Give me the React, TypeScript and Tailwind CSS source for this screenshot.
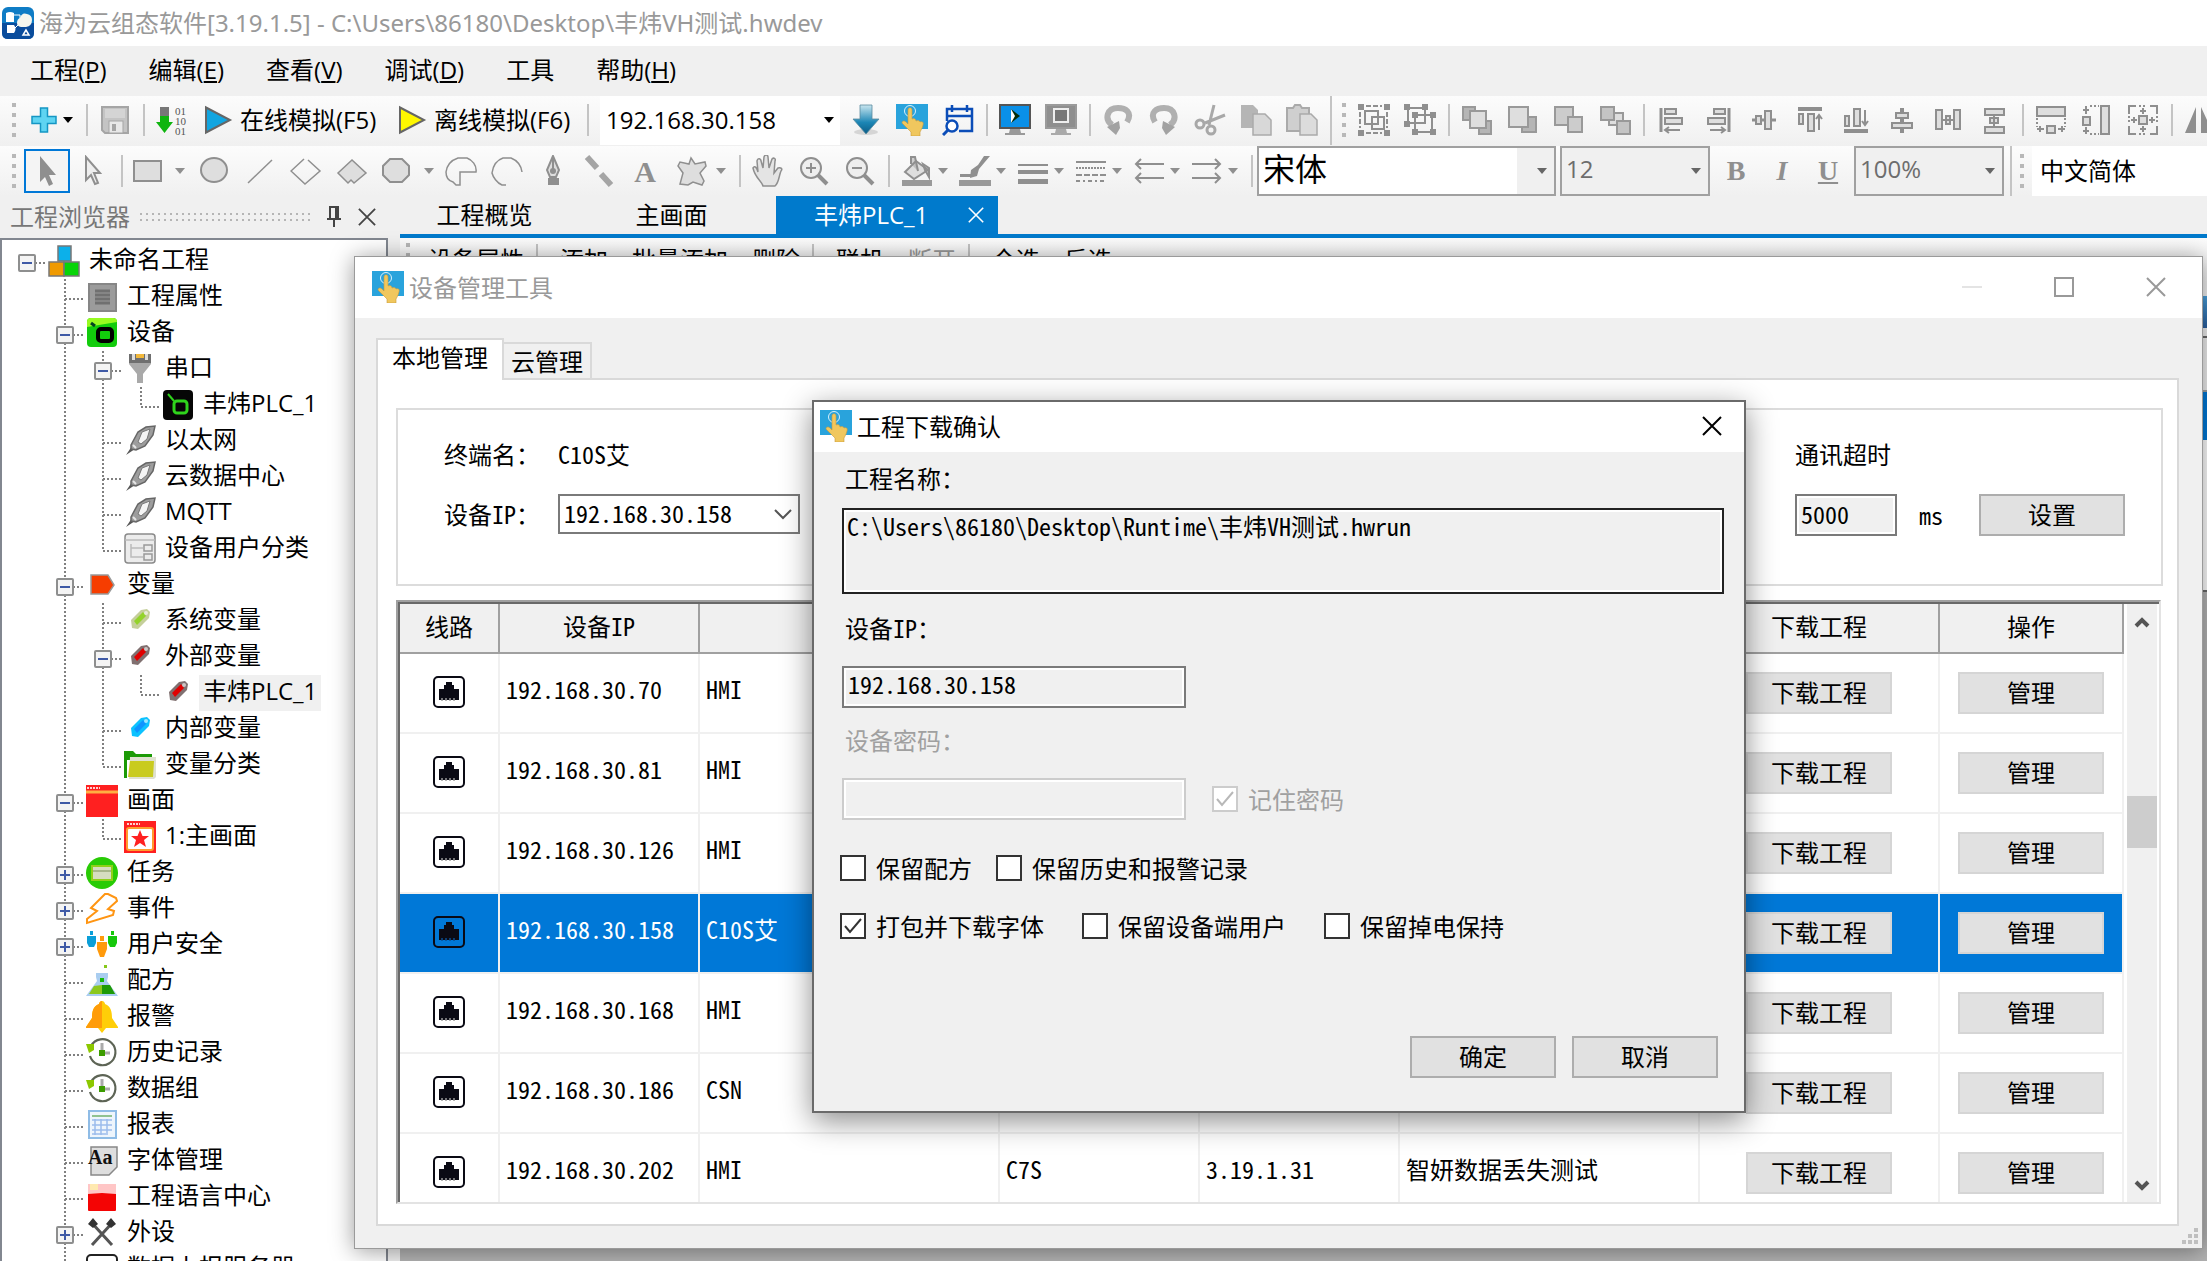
import { useId, type ReactNode } from "react";

const G = "#8f8f8f";
const L = "#dedede";

function Svg({ children, className = "h-8 w-8" }: { children: ReactNode; className?: string }) {
  return (
    <svg viewBox="0 0 32 32" fill="none" className={`shrink-0 ${className}`}>
      {children}
    </svg>
  );
}

function HandIcon() {
  return (
    <Svg>
      <rect y="0" width="32" height="25" fill="#29a3dc" />
      <circle cx="14" cy="7" r="5.5" stroke="#d8f0fb" strokeWidth="1" />
      <path d="M12 6c0-3 4-3 4 0v9c2-1 4 0 4 2 2-1 4 0 4 1 2-1 4 0 3 3-1 4-2 5-3 7v4h-9v-4l-9-9c0-2 2-3 4-1l2 2z" fill="#f0c75e" stroke="#c99b3a" strokeWidth=".6" />
    </Svg>
  );
}

/* Main toolbar icons, in 32px boxes */

const FILE_ICONS = {
  plus: <path d="M12.500 4h7v8.500H28v7h-8.500V28h-7v-8.500H4v-7h8.500z" fill="#5fd4f2" stroke="#1596c4" strokeWidth="1.500" />,
  save: (
    <>
      <path d="M3 3h26v26H6l-3-3z" fill="#c4c4c4" stroke="#a5a5a5" strokeWidth="2" />
      <rect x="6" y="5" width="20" height="9" fill="#d4d4d4" />
      <rect x="10" y="17" width="14" height="12" fill="#e8e8e8" stroke="#a5a5a5" />
      <rect x="13" y="20" width="4" height="7" fill="#a5a5a5" />
    </>
  ),
  transfer: (
    <>
      <path d="M4 3h9v15h4L8.500 29 0 18h4z" fill="#0fb50f" />
      <rect x="4" y="3" width="9" height="9" fill="#777" />
      <text x="19" y="11" fontSize="11" fontFamily="Liberation Serif, serif" fill="#555">01</text>
      <text x="19" y="21" fontSize="11" fontFamily="Liberation Serif, serif" fill="#555">10</text>
      <text x="19" y="31" fontSize="11" fontFamily="Liberation Serif, serif" fill="#555">01</text>
    </>
  ),
  playOnline: <path d="M4 3.500 28 16 4 28.500z" fill="#12a5e0" stroke="#666" strokeWidth="2" />,
  playOffline: <path d="M4 3.500 28 16 4 28.500z" fill="#fff700" stroke="#666" strokeWidth="2" />,
};

const RUN_ICONS = {
  download: (
    <>
      <defs>
        <linearGradient id="down" x1="0" y1="0" x2="0" y2="1">
          <stop offset="0" stopColor="#c9e6ef" />
          <stop offset=".6" stopColor="#1c86b5" />
          <stop offset="1" stopColor="#0b5c86" />
        </linearGradient>
      </defs>
      <ellipse cx="16" cy="28" rx="12" ry="3" fill="#d5d5d5" />
      <path d="M10 1h12v14h7L16 30 3 15h7z" fill="url(#down)" stroke="#5b8ca0" strokeWidth=".8" />
    </>
  ),
  schedule: (
    <g stroke="#0b4db8" strokeWidth="2.500">
      <path d="M5 17V5h25v22H17M5 12h25M10 1v7M25 1v7" />
      <circle cx="10" cy="22" r="5.500" fill="#fff" />
      <path d="m6 26-5 5" strokeWidth="3" />
    </g>
  ),
};

const SCREEN_ICONS = {
  monitorOn: (
    <>
      <path d="M11 25h10l1 4h4v2H6v-2h4z" fill="#999" />
      <rect x="1" y="1" width="30" height="23" fill="#0a90e8" stroke="#555" strokeWidth="2" />
      <path d="M12 5v14l9-7z" fill="#062c06" />
      <path d="M12 5v14l4-7z" fill="#fff" />
    </>
  ),
  monitorOff: (
    <>
      <path d="M11 25h10l1 4h4v2H6v-2h4z" fill="#aaa" />
      <rect x="1" y="1" width="30" height="23" fill="#8f8f8f" stroke="#9b9b9b" strokeWidth="2" />
      <rect x="9" y="5" width="14" height="13" fill="#777" stroke="#eee" strokeWidth="2" />
    </>
  ),
};

const EDIT_ICONS = {
  undo: (
    <>
      <path d="M25 18C31 8 23 4 16 4 5 4 2 15 10 21" stroke="#b0b0b0" strokeWidth="6" />
      <path d="M5 23 17 17l1 7-4 7z" fill="#a2a2a2" />
    </>
  ),
  redo: (
    <>
      <path d="M7 18C1 8 9 4 16 4c11 0 14 11 6 17" stroke="#b0b0b0" strokeWidth="6" />
      <path d="M27 23 15 17l-1 7 4 7z" fill="#a2a2a2" />
    </>
  ),
  cut: (
    <g stroke="#a8a8a8" strokeWidth="3">
      <path d="m20 1-5 20M31 11 11 19" />
      <circle cx="6" cy="20" r="4" />
      <circle cx="17" cy="26" r="4" />
    </g>
  ),
  copy: (
    <>
      <path d="M1 1h12l5 5v18H1z" fill="#b5b5b5" />
      <path d="M13 10h12l6 6v15H13z" fill="#d8d8d8" stroke="#aaa" strokeWidth="1.500" />
    </>
  ),
  paste: (
    <>
      <path d="M1 4h6l2-3h5l2 3h7v23H1z" fill="#cfcfcf" stroke="#aaa" strokeWidth="2" />
      <path d="M14 10h11l6 6v15H14z" fill="#dcdcdc" stroke="#aaa" strokeWidth="1.500" />
    </>
  ),
};

const GROUP_ICONS = {
  group: (
    <g stroke={G} strokeWidth="2">
      <path d="M8 2h16M8 29h16M2 8v16M29 8v16" strokeDasharray="5 2" />
      <path d="M7 7h13v13H7zM14 13h12v12H14z" />
      <path d="M0 0h6v6H0zM26 0h6v6h-6zM0 26h6v6H0zM26 26h6v6h-6z" fill={G} stroke="none" />
    </g>
  ),
  ungroup: (
    <g stroke={G} strokeWidth="2">
      <path d="M4 4h17v15H4zM11 11h17v17H11z" />
      <path d="M0 0h6v6H0zM18 0h6v6h-6zM0 17h6v6H0zM8 8h6v6H8zM26 8h6v6h-6zM8 25h6v6H8zM26 25h6v6h-6z" fill={G} stroke="none" />
    </g>
  ),
};

const ORDER_ICONS = {
  toFront: (
    <g stroke="#999" fill={L} strokeWidth="2">
      <path d="M2 3h12v13H2zM18 17h12v13H18z" fill="#b5b5b5" />
      <path d="M9 7h16v17H9z" />
    </g>
  ),
  forward: (
    <g stroke="#999" fill={L} strokeWidth="2">
      <path d="M15 13h14v15H15z" fill="#b5b5b5" />
      <path d="M2 3h19v20H2z" />
    </g>
  ),
  backward: (
    <g stroke="#999" fill="#ccc" strokeWidth="2">
      <path d="M2 3h18v18H2z" />
      <path d="M15 13h14v15H15z" />
    </g>
  ),
  toBack: (
    <g stroke="#999" fill={L} strokeWidth="2">
      <path d="M10 9h14v12H10z" />
      <path d="M2 3h13v13H2zM18 17h13v13H18z" fill="#c4c4c4" />
    </g>
  ),
};

const ALIGN_ICONS = {
  left: (
    <g stroke={G} strokeWidth="2">
      <path d="M5 4v24" strokeWidth="3" />
      <path d="M9 5h11v5H9zM9 14h17v6H9z" fill={L} />
      <path d="M10 26h14M13 23l-4 3 4 3" />
    </g>
  ),
  right: (
    <g stroke={G} strokeWidth="2">
      <path d="M27 4v24" strokeWidth="3" />
      <path d="M12 5h11v5H12zM6 14h17v6H6z" fill={L} />
      <path d="M8 26h14M19 23l4 3-4 3" />
    </g>
  ),
  centerV: (
    <g stroke={G} strokeWidth="2">
      <path d="M4 16h24" strokeWidth="3" />
      <path d="M8 12h5v8H8zM17 7h6v18h-6z" fill={L} />
    </g>
  ),
  top: (
    <g stroke={G} strokeWidth="2">
      <path d="M4 5h24" strokeWidth="4" />
      <path d="M5 10h4v10H5zM14 10h6v17h-6z" fill={L} />
      <path d="M25 26V12M22 15l3-4 3 4" />
    </g>
  ),
  bottom: (
    <g stroke={G} strokeWidth="2">
      <path d="M4 27h24" strokeWidth="4" />
      <path d="M5 12h4v10H5zM14 5h6v17h-6z" fill={L} />
      <path d="M25 6v14M22 17l3 4 3-4" />
    </g>
  ),
  centerH: (
    <g stroke={G} strokeWidth="2">
      <path d="M16 4v25" strokeWidth="4" />
      <path d="M10 9h12v5H10zM6 19h20v5H6z" fill={L} />
    </g>
  ),
  spaceH: (
    <g stroke={G} strokeWidth="2">
      <path d="M4 6h6v19H4zM22 6h6v19h-6z" fill={L} />
      <path d="M10 16h12M14 12h4v8h-4z" fill={L} />
    </g>
  ),
  spaceV: (
    <g stroke={G} strokeWidth="2">
      <path d="M7 5h19v6H7zM7 23h19v6H7z" fill={L} />
      <path d="M16 11v12M12 14h8v5h-8z" fill={L} />
    </g>
  ),
};

const SIZE_ICONS = {
  sameWidth: (
    <g stroke={G} strokeWidth="2">
      <path d="M2 3h28v9H2z" fill={L} />
      <path d="M2 14v9M30 14v9" strokeDasharray="2 2" />
      <path d="M12 22h8v7h-8z" fill={L} />
      <path d="M2 25h7M23 25h7M5 22v6M27 22v6" />
    </g>
  ),
  sameHeight: (
    <g stroke={G} strokeWidth="2">
      <path d="M20 2h8v28h-8z" fill={L} />
      <path d="M9 2h9M9 30h9" strokeDasharray="2 2" />
      <path d="M2 13h7v8H2z" fill={L} />
      <path d="M5 2v8M5 23v7M2 6h6M2 27h6" />
    </g>
  ),
  sameSize: (
    <g stroke={G} strokeWidth="2">
      <path d="M2 10V2h7M23 2h7v8M30 22v8h-7M9 30H2v-8" />
      <path d="M12 2h8M12 30h8M2 12v8M30 12v8" strokeDasharray="2 2" />
      <path d="M12 12h8v8h-8z" fill={L} />
      <path d="M16 4v6M16 22v6M4 16h6M22 16h6M13 7h6M13 25h6M7 13v6M25 13v6" />
    </g>
  ),
};

const SHAPE_ICONS = {
  ellipse: <ellipse cx="16" cy="15" rx="13" ry="12" fill={L} stroke={G} strokeWidth="2" />,
  line: <path d="M4 28 28 5" stroke={G} strokeWidth="1.500" />,
  polyline: <path d="M14 4 1 16l14 13 15-13L18 5" stroke={G} strokeWidth="1.500" />,
  polygon: <path d="M16 5 2 18l10 10 3-3 3 3 12-10z" fill={L} stroke={G} strokeWidth="1.500" />,
};

const CURVE_ICONS = {
  pie: <path d="M15 30V17h16c1-7-4-12-9-14h-9C7 5 2 10 1 17c0 6 3 9 7 10l3 3z" stroke={G} strokeWidth="1.500" />,
  arc: <path d="M15 30h-4C6 28 2 22 1 18 2 11 6 5 12 3h8c5 2 10 7 11 14" stroke={G} strokeWidth="1.500" />,
  pen: (
    <>
      <path d="M16 1 10 15l3 7h6l3-7z" fill={L} stroke={G} strokeWidth="2" />
      <path d="M15 1h2v14h-2zM11 23h11v7H11z" fill={G} />
      <circle cx="16" cy="16" r="3" fill={G} />
    </>
  ),
  brush: <path d="m4 2 10 11M18 19l10 11" stroke="#a5a5a5" strokeWidth="6" />,
  text: (
    <text x="16" y="27" textAnchor="middle" fontSize="30" fontWeight="700" fontFamily="Liberation Serif, serif" fill={G}>A</text>
  ),
  star: <path d="M16 3 20 9l10-2 1 4-6 7 4 8-2 4-9-3-5 3-8-1 3-11-5-7 2-4 9 2z" fill={L} stroke={G} strokeWidth="1.500" />,
};

const VIEW_ICONS = {
  hand: <path d="M11 31c-1-5-8-8-10-18 2-3 4 0 5 4L5 6c1-4 4-2 4 0l2 7 1-11c1-3 4-2 4 0l1 11 3-9c2-2 4 0 3 2l-1 12 4-5c3-1 5 1 3 3-2 4-2 12-6 15z" fill="#e4e4e4" stroke={G} strokeWidth="1.500" />,
  zoomIn: (
    <g stroke={G} strokeWidth="2">
      <circle cx="13" cy="13" r="10" fill="#eee" />
      <path d="M8 13h10M13 8v10" />
      <path d="m20 20 9 9" strokeWidth="4" />
    </g>
  ),
  zoomOut: (
    <g stroke={G} strokeWidth="2">
      <circle cx="13" cy="13" r="10" fill="#eee" />
      <path d="M8 13h10" />
      <path d="m20 20 9 9" strokeWidth="4" />
    </g>
  ),
};

const STYLE_ICONS = {
  fill: (
    <>
      <path d="m4 17 11-11 12 9-14 9z" fill={L} stroke={G} strokeWidth="2" />
      <path d="M10 9V2h4l3 14M22 9l6 4v9l-4-7z" stroke={G} strokeWidth="2" fill={G} fillOpacity=".4" />
      <rect x="1" y="25" width="30" height="6" fill="#999" />
    </>
  ),
  stroke: (
    <>
      <path d="M31 1 20 14l-2 7-7 2 1-8 7-5 6-9z" fill={G} />
      <path d="M1 19h11v3H1z" fill={G} />
      <rect y="25" width="32" height="6" fill="#999" />
    </>
  ),
  lineWidth: <path d="M1 9h30v2H1zM1 15h30v4H1zM1 24h30v5H1z" fill={G} />,
  lineStyle: (
    <g stroke={G} strokeWidth="2">
      <path d="M1 7h30" />
      <path d="M1 13h30" strokeDasharray="2 1" />
      <path d="M1 20h30" strokeDasharray="6 2" />
      <path d="M1 26h30" strokeDasharray="4 3 2 3" />
    </g>
  ),
  arrowStart: <path d="M3 9h28M8 4 3 9l5 5M3 23h28M8 18l-5 5 5 5" stroke={G} strokeWidth="2" />,
  arrowEnd: <path d="M1 9h27M24 4l5 5-5 5M1 23h27M24 18l5 5-5 5" stroke={G} strokeWidth="2" />,
};

/* Project tree icons */

const plug = (
  <>
    <path d="m2 30 6-9 3 3z" fill="#555" />
    <path d="M7 20 14 7 22 2l9-1-2 9-8 11-9 4-5-1z" fill="#9d9d9d" stroke="#666" strokeWidth="1.500" />
    <path d="m14 17 4-10 8-3-3 10-6 5z" fill="#f4f4f4" stroke="#777" />
    <path d="m9 20 3 3" stroke="#e6e6e6" strokeWidth="2" />
  </>
);

function tag(fill: string, edge: string) {
  return (
    <>
      <path d="m7 15 10-10 6-1 3 3-1 6-11 11-6-1z" fill={edge} />
      <path d="m10 16 9-9 3 4-9 9z" fill={fill} />
      <circle cx="22" cy="8" r="2" fill="#fff" fillOpacity=".6" />
    </>
  );
}

const clock = (
  <>
    <path d="M5 9a13 13 0 1 1-1 10" stroke="#5d6455" strokeWidth="2.200" />
    <path d="M16 6v10h8" stroke="#aaa" strokeWidth="3" />
    <rect x="13" y="13" width="6" height="6" fill="#3c9c00" />
    <path d="M0 7h8v6l-5 3z" fill="#8cc800" />
  </>
);

const TREE_ICONS: Record<string, ReactNode> = {
  project: (
    <g stroke="#777" strokeWidth="1.500">
      <path d="M10 1h13v15H10z" fill="#0cb0ea" />
      <path d="M1 17h15v14H1z" fill="#f09a00" />
      <path d="M16 17h15v14H16z" fill="#08d408" />
    </g>
  ),
  props: (
    <>
      <rect x="3" y="3" width="27" height="27" fill="#9b9b9b" stroke="#868686" strokeWidth="2" />
      <path d="M9 10h15M9 14h15M9 18h15M9 22h15" stroke="#707070" strokeWidth="3" />
    </>
  ),
  device: (
    <>
      <rect x="1" y="1" width="30" height="29" rx="4" fill="#12cc0c" />
      <path d="M1 10V5q0-4 4-4h22q4 0 4 4z" fill="#98fb20" />
      <path d="m5 6 4 3" stroke="#042" strokeWidth="3" />
      <rect x="12" y="12" width="14" height="12" rx="3" stroke="#000" strokeWidth="4" />
    </>
  ),
  serial: (
    <>
      <path d="M5 1h22v10l-8 10v9h-6v-9L5 11z" fill="#a9a9a9" />
      <path d="M5 1h22v9H5z" fill="#6f6f6f" />
      <path d="M8 1h3v6H8zM21 1h3v6h-3z" fill="#ddd" />
      <path d="M12 1h8v4h-8z" fill="#f2b83b" />
    </>
  ),
  plc: (
    <>
      <rect x="1" y="1" width="30" height="30" rx="4" fill="#060606" />
      <path d="m6 5 6 7" stroke="#2fd41c" strokeWidth="2" />
      <rect x="12" y="12" width="13" height="12" rx="3" stroke="#2fd41c" strokeWidth="3" />
    </>
  ),
  plug,
  users: (
    <>
      <rect x="1" y="1" width="30" height="29" rx="3" fill="#ececec" stroke="#8a8a8a" strokeWidth="1.500" />
      <path d="M1 7h30M7 11v13h12M7 15h12" stroke="#bbb" strokeWidth="1.500" />
      <path d="M20 12h8v6h-8zM20 21h8v6h-8z" stroke="#999" strokeWidth="1.500" />
    </>
  ),
  variable: <path d="M5 6h17l6 10-6 9H5z" fill="#f63d00" stroke="#999" strokeWidth="1.500" />,
  tagSystem: tag("#93d32a", "#c5cf9a"),
  tagOuter: tag("#e00000", "#807070"),
  tagInner: tag("#0f94ff", "#0cc2ff"),
  folder: (
    <>
      <path d="M0 2h9l3 3h16v6H3v18H0z" fill="#1c9a06" />
      <path d="M6 8h26v20l-2 2H5z" fill="#dfe1cf" />
      <path d="M6 12h24l-1 16H4z" fill="#c9cb1f" />
    </>
  ),
  screens: (
    <>
      <rect width="32" height="32" fill="#ff2020" />
      <path d="M1 3h13" stroke="#ffd0d0" strokeWidth="2" strokeDasharray="2 1" />
      <path d="M0 7h32" stroke="#ffae42" strokeWidth="3" />
    </>
  ),
  screen: (
    <>
      <rect width="32" height="32" fill="#ff2020" />
      <path d="M3 3h13" stroke="#ffd0d0" strokeWidth="2" strokeDasharray="2 1" />
      <rect x="3" y="7" width="26" height="22" rx="2" fill="#fff" stroke="#ff9d2e" strokeWidth="2" />
      <path d="m16 9 2.500 6H25l-5 4 2 7-6-4-6 4 2-7-5-4h6.500z" fill="#ff2020" />
    </>
  ),
  task: (
    <>
      <circle cx="16" cy="16" r="16" fill="#28cb05" />
      <rect x="6" y="9" width="20" height="14" fill="#d6ddc0" stroke="#8fd01a" strokeWidth="2" />
      <path d="M7 14h18" stroke="#98a878" strokeWidth="1.500" />
    </>
  ),
  event: <path d="M19 1 5 15l6 3L1 26v4l26-8 1-4-6-2 9-8-1-3-8-4z" fill="#fff" stroke="#ff9512" strokeWidth="2" />,
  security: (
    <>
      <path d="M1 7h9v7l-2 4H3l-2-4zM4 2h3v4H4z" fill="#0b9fd8" />
      <path d="M22 7h9v7l-2 4h-5l-2-4zM25 2h3v4h-3z" fill="#16c80c" />
      <path d="M11 13h10v7l-3 8h-4l-3-8zM14 7h4v5h-4z" fill="#ff9a0c" />
    </>
  ),
  recipe: (
    <>
      <rect x="18" y="0" width="3" height="3" fill="#86c81a" />
      <path d="M10 8h12v4l-1 4 11 15H0l11-15-1-4z" fill="#a9cdf0" />
      <path d="m8 21 8-1 8 1 5 8H3z" fill="#8cc81e" />
      <path d="M16 20h8l5 9H16z" fill="#1e9a08" />
      <rect x="14" y="13" width="4" height="4" fill="#18b80c" />
    </>
  ),
  alarm: (
    <>
      <path d="M16 0c2 0 3 2 3 3 6 2 7 8 7 14l6 9v1H0v-1l6-9c0-6 1-12 7-14 0-1 1-3 3-3M12 27h8l-4 5z" fill="#ffce08" />
      <path d="M16 0v27H0v-1l6-9c0-6 1-12 7-14 0-1 1-3 3-3" fill="#ff9c08" />
    </>
  ),
  clock,
  report: (
    <>
      <rect x="3" y="2" width="27" height="27" fill="#eef5fc" stroke="#8fbce6" strokeWidth="2" />
      <path d="M6 7h20" stroke="#90c290" strokeWidth="2" />
      <path d="M6 11h20M6 16h20M6 21h20M6 25h14M9 10v16M15 10v16M21 10v16" stroke="#9cbcec" strokeWidth="1.500" />
    </>
  ),
  fonts: (
    <>
      <path d="M5 2h26v20l-8 8H5z" fill="#dedede" stroke="#888" strokeWidth="1.500" />
      <text x="2" y="19" fontSize="20" fontWeight="700" fontFamily="Liberation Serif, serif" fill="#111">Aa</text>
    </>
  ),
  language: (
    <>
      <rect x="2" y="3" width="28" height="27" rx="1" fill="#f40404" />
      <path d="M2 3h28v10l-14-1-14 1z" fill="#ffc6c6" />
      <path d="M4 3h8v6H4z" fill="#ffe9b0" />
    </>
  ),
  tools: (
    <>
      <path d="M5 5 26 28M27 5 6 28" stroke="#555" strokeWidth="3" />
      <path d="M2 7 7 1l5 6-5 4zM30 7l-5-6-5 6 5 4z" fill="#333" />
    </>
  ),
  server: <rect x="1" y="2" width="30" height="28" rx="4" fill="#fff" stroke="#222" strokeWidth="2" />,
};

type Node = { level: number; icon: string; label: string; toggle?: "open" | "closed"; selected?: boolean };

const TREE: Node[] = [
  { level: 0, icon: "project", label: "未命名工程", toggle: "open" },
  { level: 1, icon: "props", label: "工程属性" },
  { level: 1, icon: "device", label: "设备", toggle: "open" },
  { level: 2, icon: "serial", label: "串口", toggle: "open" },
  { level: 3, icon: "plc", label: "丰炜PLC_1" },
  { level: 2, icon: "plug", label: "以太网" },
  { level: 2, icon: "plug", label: "云数据中心" },
  { level: 2, icon: "plug", label: "MQTT" },
  { level: 2, icon: "users", label: "设备用户分类" },
  { level: 1, icon: "variable", label: "变量", toggle: "open" },
  { level: 2, icon: "tagSystem", label: "系统变量" },
  { level: 2, icon: "tagOuter", label: "外部变量", toggle: "open" },
  { level: 3, icon: "tagOuter", label: "丰炜PLC_1", selected: true },
  { level: 2, icon: "tagInner", label: "内部变量" },
  { level: 2, icon: "folder", label: "变量分类" },
  { level: 1, icon: "screens", label: "画面", toggle: "open" },
  { level: 2, icon: "screen", label: "1:主画面" },
  { level: 1, icon: "task", label: "任务", toggle: "closed" },
  { level: 1, icon: "event", label: "事件", toggle: "closed" },
  { level: 1, icon: "security", label: "用户安全", toggle: "closed" },
  { level: 1, icon: "recipe", label: "配方" },
  { level: 1, icon: "alarm", label: "报警" },
  { level: 1, icon: "clock", label: "历史记录" },
  { level: 1, icon: "clock", label: "数据组" },
  { level: 1, icon: "report", label: "报表" },
  { level: 1, icon: "fonts", label: "字体管理" },
  { level: 1, icon: "language", label: "工程语言中心" },
  { level: 1, icon: "tools", label: "外设", toggle: "closed" },
  { level: 1, icon: "server", label: "数据上报服务器" },
];

const DEVICES = [
  { ip: "192.168.30.70", name: "HMI" },
  { ip: "192.168.30.81", name: "HMI" },
  { ip: "192.168.30.126", name: "HMI" },
  { ip: "192.168.30.158", name: "C10S艾", selected: true },
  { ip: "192.168.30.168", name: "HMI" },
  { ip: "192.168.30.186", name: "CSN" },
  { ip: "192.168.30.202", name: "HMI", model: "C7S", version: "3.19.1.31", project: "智妍数据丢失测试" },
];

const MENUS = [
  ["工程", "P"],
  ["编辑", "E"],
  ["查看", "V"],
  ["调试", "D"],
  ["工具", ""],
  ["帮助", "H"],
];

// does a later row continue the branch line of this level?
function branchContinues(index: number, level: number) {
  for (let i = index + 1; i < TREE.length; i++) {
    if (TREE[i].level < level) return false;
    if (TREE[i].level === level) return true;
  }
  return level === 1;
}

function TreeRow({ node, index }: { node: Node; index: number }) {
  const cells = Array.from({ length: node.level + 1 }, (_, level) => level);
  return (
    <li className="flex h-9 items-center whitespace-nowrap">
      {cells.map((level) => {
        const own = level === node.level;
        const below = level > 0 && branchContinues(index, level);
        return (
          <svg key={level} viewBox="0 0 38 36" className="h-9 w-[38px] shrink-0" fill="none">
            <g stroke="#808080" strokeWidth="2" strokeDasharray="2 2">
              {level > 0 && own && <path d="M19 0v20" />}
              {below && <path d={own ? "M19 20v16" : "M19 0v36"} />}
              {own && <path d="M19 20h19" />}
            </g>
            {own && node.toggle && (
              <>
                <rect x="11" y="12" width="16" height="16" rx="1" fill="#f4f4f4" stroke="#8e8f8f" strokeWidth="2" />
                <path d={node.toggle === "open" ? "M14 20h10" : "M14 20h10M19 15v10"} stroke="#3f5aa6" strokeWidth="2" />
              </>
            )}
          </svg>
        );
      })}
      <Svg className="ml-[2px] h-8 w-8">{TREE_ICONS[node.icon]}</Svg>
      <span className={`ml-[5px] h-9 px-1 leading-8 ${node.selected ? "bg-[#f0f0f0]" : ""}`}>{node.label}</span>
    </li>
  );
}

function Grip() {
  return (
    <span className="mr-3 flex w-1 shrink-0 flex-col gap-[6px]">
      <i className="h-1 w-1 bg-[#b8b8b8]" />
      <i className="h-1 w-1 bg-[#b8b8b8]" />
      <i className="h-1 w-1 bg-[#b8b8b8]" />
      <i className="h-1 w-1 bg-[#b8b8b8]" />
    </span>
  );
}

function Sep() {
  return <span className="ml-3 mr-[11px] h-8 w-[2px] shrink-0 bg-[#c4c4c4]" />;
}

function Caret({ color = "text-[#8f8f8f]" }: { color?: string }) {
  return (
    <svg viewBox="0 0 12 6" className={`h-[6px] w-3 shrink-0 ${color}`} fill="currentColor">
      <path d="M1 0h10L6 6z" />
    </svg>
  );
}

function ToolGroup({ icons }: { icons: Record<string, ReactNode> }) {
  return (
    <div className="flex shrink-0 gap-[14px]">
      {Object.entries(icons).map(([name, icon]) => (
        <button key={name} aria-label={name}>
          <Svg>{icon}</Svg>
        </button>
      ))}
    </div>
  );
}

function DropTool({ name, children, gap = "gap-1" }: { name: string; children: ReactNode; gap?: string }) {
  return (
    <button aria-label={name} className={`flex shrink-0 items-center ${gap}`}>
      <Svg>{children}</Svg>
      <Caret />
    </button>
  );
}

function CloseIcon({ className }: { className: string }) {
  return (
    <svg viewBox="0 0 20 20" className={className} stroke="currentColor" strokeWidth="2" fill="none">
      <path d="M1 1l18 18M19 1 1 19" />
    </svg>
  );
}

function MainToolbar() {
  return (
    <div className="flex h-[50px] items-center overflow-hidden bg-gradient-to-b from-[#fcfcfc] to-[#f0f0f0] pb-[2px] pl-3">
      <Grip />
      <button aria-label="new" className="flex items-center gap-[2px]">
        <Svg>{FILE_ICONS.plus}</Svg>
        <Caret color="text-black" />
      </button>
      <Sep />
      <button aria-label="save"><Svg>{FILE_ICONS.save}</Svg></button>
      <Sep />
      <button aria-label="compile"><Svg>{FILE_ICONS.transfer}</Svg></button>
      <button className="ml-[14px] flex w-[194px] shrink-0 items-center gap-[6px]">
        <Svg>{FILE_ICONS.playOnline}</Svg>在线模拟(F5)
      </button>
      <button className="flex w-[179px] shrink-0 items-center gap-[6px]">
        <Svg>{FILE_ICONS.playOffline}</Svg>离线模拟(F6)
      </button>
      <Sep />
      <div className="relative flex h-[50px] w-60 shrink-0 items-center bg-white">
        <select aria-label="目标地址" className="h-full w-full appearance-none pl-[6px] outline-none">
          <option>192.168.30.158</option>
        </select>
        <span className="pointer-events-none absolute right-[5px]"><Caret color="text-black" /></span>
      </div>
      <div className="ml-[10px] flex shrink-0 gap-[14px]">
        <button aria-label="download"><Svg>{RUN_ICONS.download}</Svg></button>
        <button aria-label="device tool"><HandIcon /></button>
        <button aria-label="schedule"><Svg>{RUN_ICONS.schedule}</Svg></button>
      </div>
      <Sep />
      <ToolGroup icons={SCREEN_ICONS} />
      <Sep />
      <ToolGroup icons={EDIT_ICONS} />
      <span className="ml-3 mr-[10px] h-[50px] w-[2px] shrink-0 bg-[#c4c4c4]" />
      <Grip />
      <ToolGroup icons={GROUP_ICONS} />
      <Sep />
      <ToolGroup icons={ORDER_ICONS} />
      <Sep />
      <ToolGroup icons={ALIGN_ICONS} />
      <Sep />
      <ToolGroup icons={SIZE_ICONS} />
      <Sep />
      <Svg><path d="M1 29 12 3v26zM17 3v26l12 0z" fill={G} /></Svg>
    </div>
  );
}

function ComboBox({ label, value, className }: { label: string; value: string; className: string }) {
  return (
    <div className={`relative flex h-[50px] shrink-0 items-center border-2 border-[#a0a0a0] ${className}`}>
      <select aria-label={label} className="h-full w-full appearance-none pb-1 pl-1 outline-none">
        <option>{value}</option>
      </select>
      <span className="pointer-events-none absolute right-[6px]"><Caret color="text-[#666]" /></span>
    </div>
  );
}

function DrawToolbar() {
  return (
    <div className="flex h-[50px] items-center overflow-hidden bg-gradient-to-b from-[#fcfcfc] to-[#f0f0f0] pl-3">
      <Grip />
      <button aria-label="select" className="-ml-1 flex h-11 w-[46px] shrink-0 items-center justify-center border-2 border-[#0078d7] bg-[#f4f4f4]">
        <Svg><path d="M9 1v26l5-5 4 9 4-2-4-9h7z" fill={G} /></Svg>
      </button>
      <button aria-label="direct select" className="ml-[7px]">
        <Svg><path d="M9 2v23l5-5 4 9 3-1-4-10h6z" fill="#eee" stroke={G} strokeWidth="2" /></Svg>
      </button>
      <span className="ml-3 mr-2 h-8 w-[2px] shrink-0 bg-[#c4c4c4]" />
      <DropTool name="rectangle" gap="gap-[11px]">
        <rect x="3" y="6" width="27" height="20" fill={L} stroke={G} strokeWidth="2" />
      </DropTool>
      <span className="w-3 shrink-0" />
      <ToolGroup icons={SHAPE_ICONS} />
      <span className="w-3 shrink-0" />
      <DropTool name="octagon" gap="gap-[11px]">
        <path d="M10 4h12l7 7v9l-7 7H10l-7-7v-9z" fill={L} stroke={G} strokeWidth="2" />
      </DropTool>
      <span className="w-[10px] shrink-0" />
      <ToolGroup icons={CURVE_ICONS} />
      <span className="ml-2"><Caret /></span>
      <Sep />
      <ToolGroup icons={VIEW_ICONS} />
      <Sep />
      <div className="flex shrink-0 gap-[10px]">
        {Object.entries(STYLE_ICONS).map(([name, icon]) => (
          <DropTool key={name} name={name}>{icon}</DropTool>
        ))}
      </div>
      <span className="ml-3 mr-1 h-8 w-[2px] shrink-0 bg-[#c4c4c4]" />
      <ComboBox label="字体" value="宋体" className="w-[299px] bg-[linear-gradient(to_right,#fff_258px,#f0f0f0_258px)] text-[32px]" />
      <ComboBox label="字号" value="12" className="ml-1 w-[150px] bg-[#f0f0f0] text-[#6d6d6d]" />
      <div className="ml-[10px] flex gap-[14px] font-['Liberation_Serif',serif] text-[28px] text-[#8f8f8f]">
        <button className="w-8 font-bold">B</button>
        <button className="w-8 font-bold italic">I</button>
        <button className="w-8 font-bold underline">U</button>
      </div>
      <ComboBox label="缩放" value="100%" className="ml-[10px] w-[150px] bg-[#f0f0f0] text-[#6d6d6d]" />
      <span className="ml-[6px] mr-2 h-[50px] w-[2px] shrink-0 bg-[#c4c4c4]" />
      <Grip />
      <div className="-ml-1 flex h-full min-w-0 flex-1 items-center whitespace-nowrap bg-white pl-2">中文简体</div>
    </div>
  );
}

function ProjectPanel() {
  return (
    <aside className="flex w-[388px] shrink-0 flex-col">
      <div className="flex h-[42px] items-center gap-2 pl-[10px] pr-3 text-[#777]">
        <h2>工程浏览器</h2>
        <span className="h-3 flex-1 bg-[radial-gradient(#b5b5b5_1px,transparent_1px)] bg-[size:6px_6px]" />
        <button aria-label="固定" className="ml-2">
          <svg viewBox="0 0 16 22" className="h-[22px] w-4" fill="none" stroke="#444" strokeWidth="2">
            <path d="M4 1h8v12H4zM10 1v12M1 13h14M8 13v8" />
          </svg>
        </button>
        <button aria-label="关闭" className="ml-2 text-[#444]"><CloseIcon className="h-[18px] w-[18px]" /></button>
      </div>
      <ul className="min-h-0 flex-1 overflow-hidden border-2 border-b-0 border-[#828790] bg-white pl-[6px] pt-[3px]">
        {TREE.map((node, i) => (
          <TreeRow key={i} node={node} index={i} />
        ))}
      </ul>
    </aside>
  );
}

function Workspace() {
  return (
    <main className="ml-3 flex min-w-0 flex-1 flex-col">
      <div className="flex h-[42px] items-stretch border-b-4 border-[#007acc]">
        <button className="ml-9 w-[97px]">工程概览</button>
        <button className="ml-[102px] w-[73px]">主画面</button>
        <div className="ml-[68px] flex w-[222px] items-center justify-between bg-[#007acc] pl-[38px] pr-[14px] text-white">
          <button>丰炜PLC_1</button>
          <button aria-label="关闭标签"><CloseIcon className="h-4 w-4" /></button>
        </div>
      </div>
      <div className="flex h-11 items-center whitespace-nowrap bg-gradient-to-b from-[#fcfcfc] to-[#f0f0f0] pl-[6px]">
        <Grip />
        <button className="ml-[6px]">设备属性</button>
        <Sep />
        <button className="ml-[11px]">添加</button>
        <button className="ml-6">批量添加</button>
        <button className="ml-6">删除</button>
        <Sep />
        <button className="ml-[11px]">联机</button>
        <button className="ml-6 text-[#999]">断开</button>
        <Sep />
        <button className="ml-[11px]">全选</button>
        <button className="ml-6">反选</button>
      </div>
      {/* right edge of the device grid, mostly under the tool window */}
      <div className="flex flex-1 flex-col items-end bg-[#b4b4b4]">
        <div className="h-[14px] w-3 bg-[#f0f0f0]" />
        <div className="h-8 w-3 bg-gradient-to-b from-[#4aa0dc] to-[#2a5f9e]" />
        <div className="h-[10px] w-3 border-b-2 border-[#696969] bg-[#f0f0f0]" />
        <div className="h-[54px] w-3 border-b-2 border-[#a0a0a0] bg-[#f0f0f0]" />
        <div className="h-12 w-3 bg-[#0078d7]" />
        <div className="h-[152px] w-3 border-b-2 border-[#696969] bg-white" />
      </div>
    </main>
  );
}

function PushButton({ children, muted = false }: { children: ReactNode; muted?: boolean }) {
  return (
    <button className={`h-[42px] w-[146px] border-2 bg-[#e1e1e1] pb-[2px] text-black ${muted ? "border-[#d5d5d5]" : "border-[#adadad]"}`}>
      {children}
    </button>
  );
}

function CheckBox({ label, checked = false, disabled = false }: { label: string; checked?: boolean; disabled?: boolean }) {
  return (
    <label className={`flex items-center gap-[10px] ${disabled ? "text-[#a0a0a0]" : ""}`}>
      <span className="relative h-[26px] w-[26px]">
        <input
          type="checkbox"
          defaultChecked={checked}
          disabled={disabled}
          className="peer block h-[26px] w-[26px] appearance-none border-2 border-[#333] bg-white disabled:border-[#ccc]"
        />
        <svg
          viewBox="0 0 26 26"
          className="pointer-events-none absolute inset-0 hidden peer-checked:block"
          fill="none"
          stroke={disabled ? "#b8b8b8" : "#333"}
          strokeWidth="2"
        >
          <path d="m5 13 5 6L21 6" />
        </svg>
      </span>
      {label}
    </label>
  );
}

function EthernetIcon({ selected = false }: { selected?: boolean }) {
  return (
    <Svg className="mx-auto h-8 w-8">
      <rect x="1" y="1" width="30" height="30" rx="4" fill={selected ? "#0078d7" : "#fff"} stroke="#0a0a14" strokeWidth="2" />
      <path d="M6 13h5V9h2V6h6v3h2v4h5v11H6z" fill="#0a0a14" />
      <path d="M9 22v3M13 22v3M17 22v3M21 22v3" stroke={selected ? "#0a4c90" : "#999"} strokeWidth="1.500" />
    </Svg>
  );
}

function DeviceTable() {
  return (
    <div className="mb-5 ml-[18px] mr-4 flex min-h-0 flex-1 border-2 border-b-[#e3e3e3] border-l-[#a0a0a0] border-r-[#e3e3e3] border-t-[#a0a0a0]">
      <div className="min-w-0 flex-1 overflow-hidden border-l-2 border-t-2 border-[#696969]">
        <table className="w-full table-fixed border-separate border-spacing-0">
          <colgroup>
            <col className="w-[100px]" />
            <col className="w-[200px]" />
            <col />
            <col className="w-[200px]" />
            <col className="w-[200px]" />
            <col className="w-[300px]" />
            <col className="w-[240px]" />
            <col className="w-[184px]" />
          </colgroup>
          <thead>
            <tr className="h-[50px] bg-[#f0f0f0] [&>th]:border-b-2 [&>th]:border-r-2 [&>th]:border-[#a0a0a0] [&>th]:pb-1 [&>th]:font-normal">
              <th>线路</th>
              <th>设备IP</th>
              <th>终端名</th>
              <th>型号</th>
              <th>版本</th>
              <th>工程名称</th>
              <th>下载工程</th>
              <th>操作</th>
            </tr>
          </thead>
          <tbody>
            {DEVICES.map((d) => (
              <tr
                key={d.ip}
                className={`h-20 [&>td]:border-b-2 [&>td]:border-r-2 [&>td]:border-[#f0f0f0] ${d.selected ? "bg-[#0078d7] text-white" : "bg-white"}`}
              >
                <td className="pb-[2px]"><EthernetIcon selected={d.selected} /></td>
                <td className="pb-2 pl-[6px]">{d.ip}</td>
                <td className="pb-2 pl-[6px]">{d.name}</td>
                <td className="pb-2 pl-[6px]">{d.model}</td>
                <td className="pb-2 pl-[6px]">{d.version}</td>
                <td className="pb-2 pl-[6px]">{d.project}</td>
                <td className="text-center"><PushButton muted>下载工程</PushButton></td>
                <td className="text-center"><PushButton muted>管理</PushButton></td>
              </tr>
            ))}
          </tbody>
        </table>
      </div>
      <div className="flex shrink-0 border-t-2 border-[#696969] pl-[3px]">
        <div className="mr-[2px] flex w-[30px] flex-col items-center bg-[#f0f0f0] py-[10px]">
          <svg viewBox="0 0 16 12" className="mt-[2px] h-3 w-4" fill="none" stroke="#555" strokeWidth="4"><path d="m2 10 6-6 6 6" /></svg>
          <div className="mt-[168px] h-[52px] w-[30px] bg-[#cdcdcd]" />
          <svg viewBox="0 0 16 12" className="mt-auto h-3 w-4" fill="none" stroke="#555" strokeWidth="4"><path d="m2 2 6 6 6-6" /></svg>
        </div>
      </div>
    </div>
  );
}

function DeviceManager() {
  const ipId = useId();
  const timeoutId = useId();
  return (
    <section className="absolute bottom-[12px] left-[354px] right-[4px] top-[256px] flex flex-col border border-[#9a9a9a] bg-[#f0f0f0] font-['Noto_Sans_CJK_SC',sans-serif] shadow-[0_2px_22px_rgba(0,0,0,0.4)] [font-feature-settings:'hwid']">
      <header className="flex h-[61px] shrink-0 items-center bg-white pb-[2px] pl-[17px] pr-[36px] text-[#999]">
        <HandIcon />
        <h1 className="ml-[5px]">设备管理工具</h1>
        <div className="ml-auto flex items-center gap-[72px]">
          <button aria-label="最小化" className="h-[2px] w-5 bg-[#e4e4e4]" />
          <button aria-label="最大化" className="h-5 w-5 border-2 border-[#999]" />
          <button aria-label="关闭"><CloseIcon className="h-5 w-5" /></button>
        </div>
      </header>

      <div className="flex min-h-0 flex-1 flex-col pb-[22px] pl-[21px] pr-[23px] pt-5">
        <div role="tablist" className="relative z-10 flex items-end">
          <button role="tab" aria-selected="true" className="-mb-[2px] h-[42px] w-[128px] border-2 border-b-0 border-[#d9d9d9] bg-white pb-[6px]">
            本地管理
          </button>
          <button role="tab" aria-selected="false" className="h-9 w-[88px] border-2 border-b-0 border-l-0 border-[#d9d9d9]">
            云管理
          </button>
        </div>

        <div className="flex min-h-0 flex-1 flex-col border-2 border-[#d9d9d9] bg-white">
          <div className="ml-[18px] mr-[14px] mt-7 flex h-[178px] shrink-0 items-start justify-between border-2 border-[#dcdcdc] pl-[46px] pr-9 pt-6">
            <div className="grid grid-cols-[114px_242px] gap-y-5">
              <span className="leading-10">终端名：</span>
              <span className="leading-10">C10S艾</span>
              <label htmlFor={ipId} className="leading-10">设备IP：</label>
              <div className="relative flex items-center">
                <select id={ipId} className="h-10 w-full appearance-none border-2 border-[#7a7a7a] bg-white pb-[2px] pl-1">
                  <option>192.168.30.158</option>
                </select>
                <svg viewBox="0 0 18 12" className="pointer-events-none absolute right-2 h-3 w-[18px]" fill="none" stroke="#555" strokeWidth="2">
                  <path d="m1 2 8 8 8-8" />
                </svg>
              </div>
            </div>
            <div className="grid grid-cols-[102px_82px_146px] items-center gap-y-5">
              <label htmlFor={timeoutId} className="col-span-3 leading-10">通讯超时</label>
              <input id={timeoutId} readOnly defaultValue="5000" className="h-[42px] w-full border-2 border-[#7a7a7a] bg-[#f0f0f0] pb-1 pl-1 ring-2 ring-inset ring-white" />
              <span className="pl-[22px]">ms</span>
              <PushButton>设置</PushButton>
            </div>
          </div>
          <div className="h-[14px] shrink-0" />
          <DeviceTable />
        </div>
      </div>
      <svg viewBox="0 0 16 16" className="absolute bottom-1 right-1 h-4 w-4" fill="#bfbfbf">
        <path d="M12 0h4v4h-4zM6 6h4v4H6zM12 6h4v4h-4zM0 12h4v4H0zM6 12h4v4H6zM12 12h4v4h-4z" />
      </svg>
    </section>
  );
}

function ConfirmDialog() {
  const nameId = useId();
  const ipId = useId();
  const passId = useId();
  return (
    <section
      role="dialog"
      className="absolute left-[812px] top-[400px] w-[934px] border-2 border-[#6a6a6a] bg-[#f0f0f0] font-['Noto_Sans_CJK_SC',sans-serif] shadow-[0_8px_28px_rgba(0,0,0,0.45)] [font-feature-settings:'hwid']"
    >
      <header className="flex h-[50px] items-center bg-white pb-[2px] pl-[6px] pr-[22px]">
        <HandIcon />
        <h2 className="ml-[5px]">工程下载确认</h2>
        <button aria-label="关闭" className="ml-auto"><CloseIcon className="h-5 w-5" /></button>
      </header>
      <form className="flex flex-col pb-[33px] pl-7 pr-5 pt-[6px]" onSubmit={(e) => e.preventDefault()}>
        <label htmlFor={nameId} className="pl-[3px] leading-10">工程名称：</label>
        <textarea
          id={nameId}
          readOnly
          defaultValue={"C:\\Users\\86180\\Desktop\\Runtime\\丰炜VH测试.hwrun"}
          className="mt-[10px] h-[86px] resize-none border-2 border-[#222] px-[3px] leading-8 ring-2 ring-inset ring-white"
        />
        <label htmlFor={ipId} className="mt-[14px] pl-[3px] leading-10">设备IP：</label>
        <input id={ipId} readOnly defaultValue="192.168.30.158" className="mt-[18px] h-[42px] w-[344px] border-2 border-[#7a7a7a] px-1 pb-2 ring-2 ring-inset ring-white" />
        <label htmlFor={passId} className="mt-3 pl-[3px] leading-10 text-[#a0a0a0]">设备密码：</label>
        <div className="mt-[18px] flex items-center gap-[26px]">
          <input id={passId} type="password" disabled className="h-[42px] w-[344px] border-2 border-[#ccc] ring-2 ring-inset ring-white" />
          <CheckBox label="记住密码" checked disabled />
        </div>
        <div className="-ml-[2px] mt-7 flex h-10 items-center gap-6">
          <CheckBox label="保留配方" />
          <CheckBox label="保留历史和报警记录" />
        </div>
        <div className="-ml-[2px] mt-[18px] flex h-10 items-center gap-[38px]">
          <CheckBox label="打包并下载字体" checked />
          <CheckBox label="保留设备端用户" />
          <CheckBox label="保留掉电保持" />
        </div>
        <div className="mt-[90px] flex justify-end gap-4 pr-[6px]">
          <PushButton>确定</PushButton>
          <PushButton>取消</PushButton>
        </div>
      </form>
    </section>
  );
}

export default function App() {
  return (
    <div className="relative flex h-screen flex-col overflow-hidden bg-[#f0f0f0] font-['Open_Sans','Noto_Sans_CJK_SC',sans-serif] text-[24px] leading-8 text-black">
      <header className="flex h-[46px] shrink-0 items-center bg-white pl-[2px] text-[#999]">
        <Svg>
          <rect width="32" height="32" rx="6" fill="#0f7cc5" />
          <path d="M0 16h32v10q0 6-6 6H6q-6 0-6-6z" fill="#0a4c9c" />
          <path d="M4 6q4-2 8 0v9H4zM5 18h7q3 4 0 8H5z" fill="#fff" />
          <path d="M12 8h6v4M12 22l4-4" stroke="#fff" />
          <path d="M15 16q0-4 3-5 2-6 7-4 5 1 5 6 0 6-6 7h-5q-4-1-4-4" fill="#f6f6ee" />
          <path d="m24 23-3 5h6z" stroke="#fff" strokeWidth="1.500" />
        </Svg>
        <h1 className="ml-[5px] whitespace-pre font-['Noto_Sans','Noto_Sans_CJK_SC',sans-serif]">海为云组态软件[3.19.1.5] - C:\Users\86180\Desktop\丰炜VH测试.hwdev</h1>
      </header>
      <nav className="flex h-[50px] shrink-0 items-center gap-[42px] pb-[2px] pl-[30px]">
        {MENUS.map(([label, key]) => (
          <button key={label}>
            {label}
            {key && <>(<u>{key}</u>)</>}
          </button>
        ))}
      </nav>
      <div className="shrink-0">
        <MainToolbar />
        <DrawToolbar />
      </div>
      <div className="flex min-h-0 flex-1">
        <ProjectPanel />
        <Workspace />
      </div>
      <DeviceManager />
      <ConfirmDialog />
    </div>
  );
}
